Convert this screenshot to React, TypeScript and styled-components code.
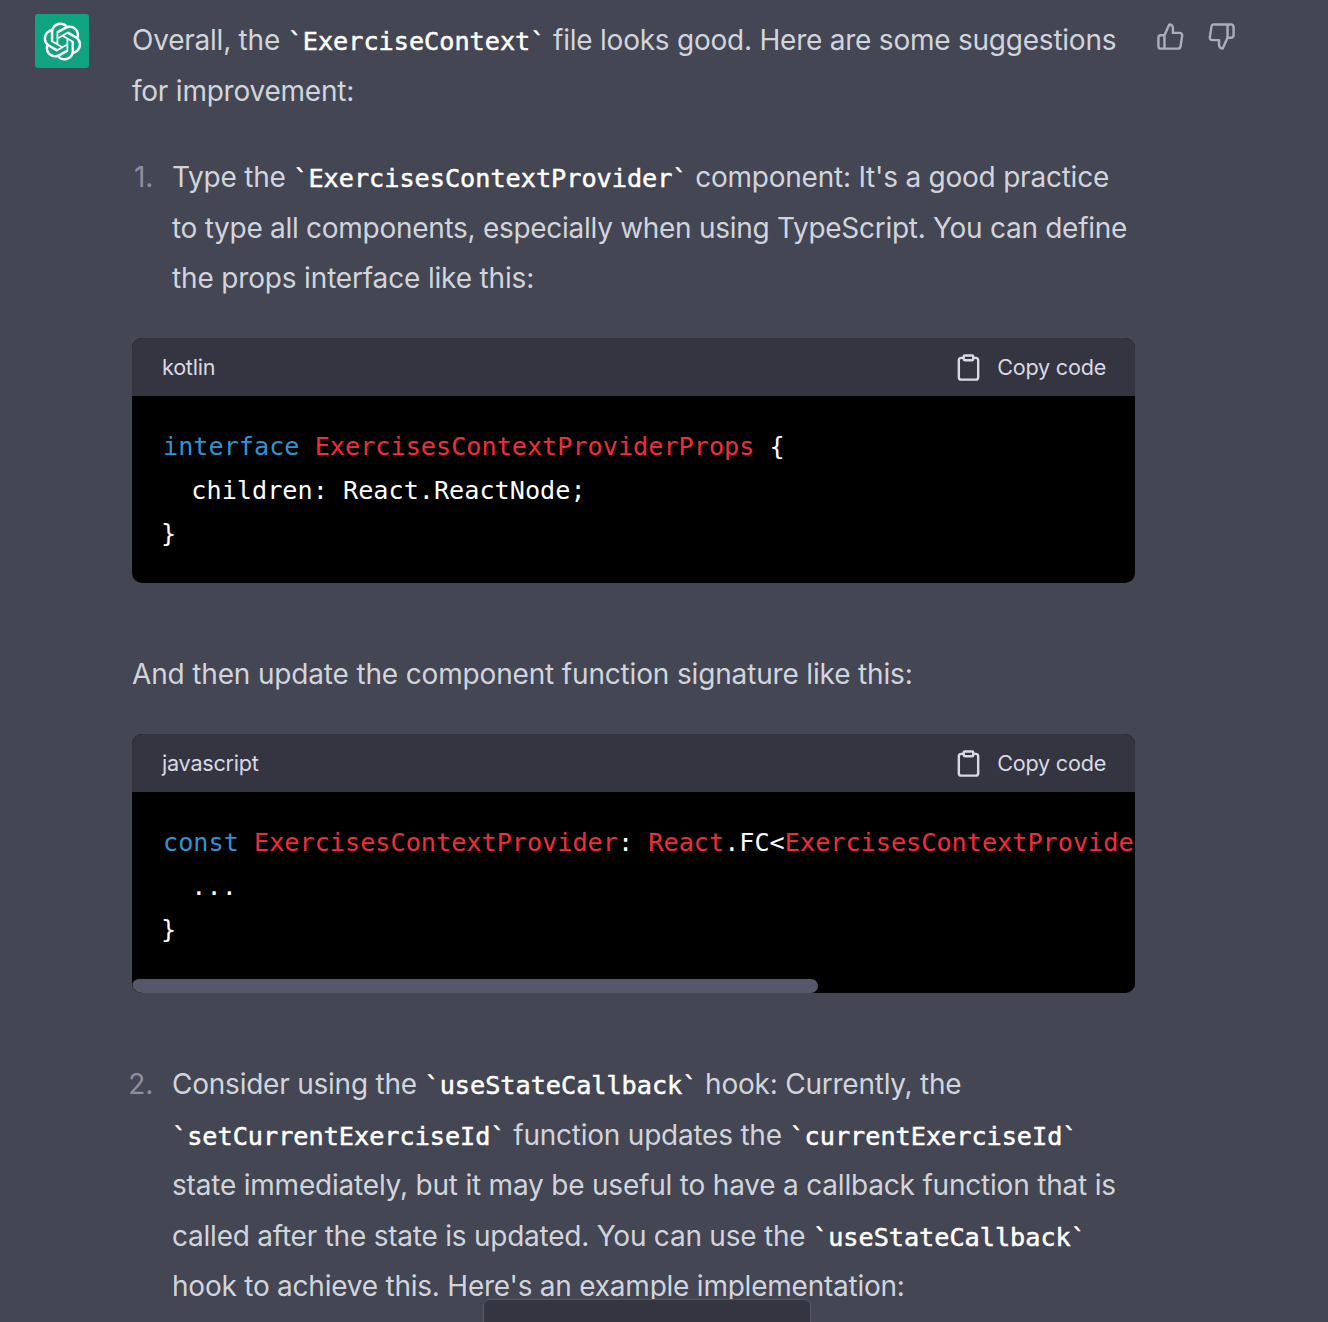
import React from "react";
import styled, { createGlobalStyle } from "styled-components";

const Global = createGlobalStyle`
  html, body { margin: 0; padding: 0; height: 1322px; overflow: hidden; background: #444654; }
`;

const Page = styled.div`
  position: relative;
  width: 1328px;
  height: 1322px;
  overflow: hidden;
  box-sizing: border-box;
  padding: 14px 0 0 35px;
  display: flex;
  align-items: flex-start;
  background: #444654;
  color: #d1d5db;
  font-family: Inter, "Noto Sans", sans-serif;
  font-size: 28px;
  letter-spacing: -0.23px;
  line-height: 50.4px;
`;

const Avatar = styled.div`
  flex: none;
  width: 54px;
  height: 54px;
  border-radius: 3px;
  background: #10a37f;
  color: #fff;
  display: flex;
  align-items: center;
  justify-content: center;
`;

const Content = styled.div`
  flex: none;
  width: 1003px;
  margin: 1.4px 0 0 43px;
`;

const Paragraph = styled.p<{ $top?: number; $spacing?: number }>`
  margin: ${(p) => p.$top ?? 0}px 0 0;
  white-space: nowrap;
  ${(p) => (p.$spacing !== undefined ? `letter-spacing: ${p.$spacing}px;` : "")}
`;

const Line = styled.span<{ $spacing: number }>`
  letter-spacing: ${(p) => p.$spacing}px;
`;

const Item = styled.div<{ $top: number }>`
  display: grid;
  grid-template-columns: 29px 1fr;
  column-gap: 19px;
  margin: ${(p) => p.$top}px 0 0 -8px;
  white-space: nowrap;
`;

const Marker = styled.span`
  color: #8e8ea0;
  text-align: right;
`;

const Inline = styled.code`
  font-family: "DejaVu Sans Mono", monospace;
  font-weight: 400;
  font-size: 25.2px;
  letter-spacing: 0;
  line-height: 1;
  color: #fff;
  -webkit-text-stroke: 0.5px #fff;
`;

const CodeBlock = styled.div<{ $top?: number }>`
  margin-top: ${(p) => p.$top ?? 35}px;
  border-radius: 10px;
  overflow: hidden;
  background: #000;
`;

const CodeHeader = styled.div`
  height: 58px;
  box-sizing: border-box;
  padding: 0 29px 0 30px;
  background: #343541;
  display: flex;
  align-items: center;
  justify-content: space-between;
  font-size: 21.6px;
  line-height: 28px;
  color: #d9d9e3;
`;

const CopyButton = styled.span`
  display: flex;
  align-items: center;
  gap: 14px;
`;

const CodeBody = styled.pre`
  margin: 0;
  padding: 29px 0 27.5px 29px;
  overflow: hidden;
  font-family: "DejaVu Sans Mono", monospace;
  font-size: 25.2px;
  letter-spacing: 0;
  line-height: 43.5px;
  color: #fff;
`;

const Keyword = styled.span`
  margin-left: 2px;
  color: #2e95d3;
`;

const Name = styled.span`
  color: #f22c3d;
`;

const ScrollTrack = styled.div`
  height: 14px;
  background: #000;
`;

const ScrollThumb = styled.div`
  width: 686px;
  height: 14px;
  border-radius: 7px;
  background: #565869;
`;

const Votes = styled.div`
  flex: none;
  display: flex;
  gap: 22px;
  margin: 8px 0 0 21px;
  color: #acacbe;
`;

const BottomBar = styled.div`
  position: absolute;
  left: 483px;
  top: 1299px;
  width: 328px;
  height: 30px;
  box-sizing: border-box;
  border: 1px solid #565869;
  border-radius: 7px;
  background: #343541;
`;

const Logo = () => (
  <svg width="39" height="39" viewBox="0 0 41 41" fill="none">
    <path
      fill="currentColor"
      d="M37.5324 16.8707C37.9808 15.5241 38.1363 14.0974 37.9886 12.6859C37.8409 11.2744 37.3934 9.91076 36.676 8.68622C35.6126 6.83404 33.9882 5.3676 32.0373 4.4985C30.0864 3.62941 27.9098 3.40259 25.8215 3.85078C24.8796 2.7893 23.7219 1.94125 22.4257 1.36341C21.1295 0.785575 19.7249 0.491269 18.3058 0.500197C16.1708 0.495044 14.0893 1.16803 12.3614 2.42214C10.6335 3.67624 9.34853 5.44666 8.6917 7.47815C7.30085 7.76286 5.98686 8.3414 4.8377 9.17505C3.68854 10.0087 2.73073 11.0782 2.02839 12.312C0.956464 14.1591 0.498905 16.2988 0.721698 18.4228C0.944492 20.5467 1.83612 22.5449 3.268 24.1293C2.81966 25.4759 2.66413 26.9026 2.81182 28.3141C2.95951 29.7256 3.40701 31.0892 4.12437 32.3138C5.18791 34.1659 6.8123 35.6322 8.76321 36.5013C10.7141 37.3704 12.8907 37.5973 14.9789 37.1492C15.9208 38.2107 17.0786 39.0587 18.3747 39.6366C19.6709 40.2144 21.0755 40.5087 22.4946 40.4998C24.6307 40.5054 26.7133 39.8321 28.4418 38.5772C30.1704 37.3223 31.4556 35.5506 32.1119 33.5179C33.5027 33.2332 34.8167 32.6547 35.9659 31.821C37.115 30.9874 38.0728 29.9178 38.7752 28.684C39.8458 26.8371 40.3023 24.6979 40.0789 22.5748C39.8556 20.4517 38.9639 18.4544 37.5324 16.8707ZM22.4978 37.8849C20.7443 37.8874 19.0459 37.2733 17.6994 36.1501C17.7601 36.117 17.8666 36.0586 17.936 36.0161L25.9004 31.4156C26.1003 31.3019 26.2663 31.137 26.3813 30.9378C26.4964 30.7386 26.5563 30.5124 26.5549 30.2825V19.0542L29.9213 20.998C29.9389 21.0068 29.9541 21.0198 29.9656 21.0359C29.977 21.052 29.9842 21.0707 29.9867 21.0902V30.3889C29.9842 32.375 29.1946 34.2791 27.7909 35.6841C26.3872 37.0892 24.4838 37.8806 22.4978 37.8849ZM6.39227 31.0064C5.51397 29.4888 5.19742 27.7107 5.49804 25.9832C5.55718 26.0187 5.66048 26.0818 5.73461 26.1244L13.699 30.7248C13.8975 30.8408 14.1233 30.902 14.3532 30.902C14.583 30.902 14.8088 30.8408 15.0073 30.7248L24.731 25.1103V28.9979C24.7321 29.0177 24.7283 29.0376 24.7199 29.0556C24.7115 29.0736 24.6988 29.0893 24.6829 29.1012L16.6317 33.7497C14.9096 34.7416 12.8643 35.0097 10.9447 34.4954C9.02506 33.9811 7.38785 32.7263 6.39227 31.0064ZM4.29707 13.6194C5.17156 12.0998 6.55279 10.9364 8.19885 10.3327C8.19885 10.4013 8.19491 10.5228 8.19491 10.6071V19.808C8.19351 20.0378 8.25334 20.2638 8.36823 20.4629C8.48312 20.6619 8.64893 20.8267 8.84863 20.9404L18.5723 26.5542L15.206 28.4979C15.1894 28.5089 15.1703 28.5155 15.1505 28.5173C15.1307 28.5191 15.1107 28.516 15.0924 28.5082L7.04046 23.8557C5.32135 22.8601 4.06716 21.2235 3.55289 19.3046C3.03862 17.3858 3.30624 15.3413 4.29707 13.6194ZM31.955 20.0556L22.2312 14.4411L25.5976 12.4981C25.6142 12.4872 25.6333 12.4805 25.6531 12.4787C25.6729 12.4769 25.6928 12.4801 25.7111 12.4879L33.7631 17.1364C34.9967 17.849 36.0017 18.8982 36.6606 20.1613C37.3194 21.4244 37.6047 22.849 37.4832 24.2684C37.3617 25.6878 36.8382 27.0432 35.9743 28.1759C35.1103 29.3086 33.9415 30.1717 32.6047 30.6641C32.6047 30.5947 32.6047 30.4733 32.6047 30.3889V21.188C32.6066 20.9586 32.5474 20.7328 32.4332 20.5338C32.319 20.3348 32.154 20.1698 31.955 20.0556ZM35.3055 15.0128C35.2464 14.9765 35.1431 14.9142 35.069 14.8717L27.1045 10.2712C26.906 10.1554 26.6803 10.0943 26.4504 10.0943C26.2206 10.0943 25.9948 10.1554 25.7963 10.2712L16.0726 15.8858V11.9982C16.0715 11.9783 16.0753 11.9585 16.0837 11.9405C16.0921 11.9225 16.1048 11.9068 16.1207 11.8949L24.1719 7.25025C25.4053 6.53903 26.8158 6.19376 28.2383 6.25482C29.6608 6.31589 31.0364 6.78077 32.2044 7.59508C33.3723 8.40939 34.2842 9.53945 34.8334 10.8531C35.3826 12.1667 35.5464 13.6095 35.3055 15.0128ZM14.2424 21.9419L10.8752 19.9981C10.8576 19.9893 10.8423 19.9763 10.8309 19.9602C10.8195 19.9441 10.8122 19.9254 10.8098 19.9058V10.6071C10.8107 9.18295 11.2173 7.78848 11.9819 6.58696C12.7466 5.38544 13.8377 4.42659 15.1275 3.82264C16.4173 3.21869 17.8524 2.99464 19.2649 3.1767C20.6775 3.35876 22.0089 3.93941 23.1034 4.85067C23.0427 4.88379 22.937 4.94215 22.8668 4.98473L14.9024 9.58517C14.7025 9.69878 14.5366 9.86356 14.4215 10.0626C14.3065 10.2616 14.2466 10.4877 14.2479 10.7175L14.2424 21.9419ZM16.071 17.9991L20.4018 15.4978L24.7325 17.9975V22.9985L20.4018 25.4983L16.071 22.9985V17.9991Z"
    />
  </svg>
);

const StrokeIcon: React.FC<{ children: React.ReactNode }> = ({ children }) => (
  <svg width="29" height="29" viewBox="0 0 24 24" fill="none" stroke="currentColor" strokeWidth="2" strokeLinecap="round" strokeLinejoin="round">
    {children}
  </svg>
);

const Clipboard = () => (
  <StrokeIcon>
    <path d="M16 4h2a2 2 0 0 1 2 2v14a2 2 0 0 1-2 2H6a2 2 0 0 1-2-2V6a2 2 0 0 1 2-2h2" />
    <rect x="8" y="2" width="8" height="4" rx="1" ry="1" />
  </StrokeIcon>
);

const Header: React.FC<{ lang: string }> = ({ lang }) => (
  <CodeHeader>
    <span>{lang}</span>
    <CopyButton>
      <Clipboard />
      Copy code
    </CopyButton>
  </CodeHeader>
);

export default function App() {
  return (
    <Page>
      <Global />
      <Avatar>
        <Logo />
      </Avatar>
      <Content>
        <Paragraph>
          Overall, the <Inline>`ExerciseContext`</Inline> file looks good. Here are some suggestions
          <br />
          for improvement:
        </Paragraph>
        <Item $top={36}>
          <Marker>1.</Marker>
          <div>
            Type the <Inline>`ExercisesContextProvider`</Inline> component: It's a good practice
            <br />
            <Line $spacing={-0.285}>to type all components, especially when using TypeScript. You can define</Line>
            <br />
            <Line $spacing={-0.16}>the props interface like this:</Line>
          </div>
        </Item>
        <CodeBlock>
          <Header lang="kotlin" />
          <CodeBody>
            <Keyword>interface</Keyword> <Name>ExercisesContextProviderProps</Name>
            {" {\n  children: React.ReactNode;\n}"}
          </CodeBody>
        </CodeBlock>
        <Paragraph $top={65.5} $spacing={-0.16}>
          And then update the component function signature like this:
        </Paragraph>
        <CodeBlock>
          <Header lang="javascript" />
          <CodeBody>
            <Keyword>const</Keyword> <Name>ExercisesContextProvider</Name>: <Name>React</Name>.FC&lt;
            <Name>ExercisesContextProviderProps</Name>
            {"> = ({ children }) => {\n  ...\n}"}
          </CodeBody>
          <ScrollTrack>
            <ScrollThumb />
          </ScrollTrack>
        </CodeBlock>
        <Item $top={66}>
          <Marker>2.</Marker>
          <div>
            Consider using the <Inline>`useStateCallback`</Inline> hook: Currently, the
            <br />
            <Inline>`setCurrentExerciseId`</Inline> function updates the <Inline>`currentExerciseId`</Inline>
            <br />
            <Line $spacing={-0.2}>state immediately, but it may be useful to have a callback function that is</Line>
            <br />
            called after the state is updated. You can use the <Inline>`useStateCallback`</Inline>
            <br />
            hook to achieve this. Here's an example implementation:
          </div>
        </Item>
      </Content>
      <Votes>
        <StrokeIcon>
          <path d="M14 9V5a3 3 0 0 0-3-3l-4 9v11h11.28a2 2 0 0 0 2-1.7l1.38-9a2 2 0 0 0-2-2.3zM7 22H4a2 2 0 0 1-2-2v-7a2 2 0 0 1 2-2h3" />
        </StrokeIcon>
        <StrokeIcon>
          <path d="M10 15v4a3 3 0 0 0 3 3l4-9V2H5.72a2 2 0 0 0-2 1.7l-1.38 9a2 2 0 0 0 2 2.3zm7-13h2.67A2.31 2.31 0 0 1 22 4v7a2.31 2.31 0 0 1-2.33 2H17" />
        </StrokeIcon>
      </Votes>
      <BottomBar />
    </Page>
  );
}
